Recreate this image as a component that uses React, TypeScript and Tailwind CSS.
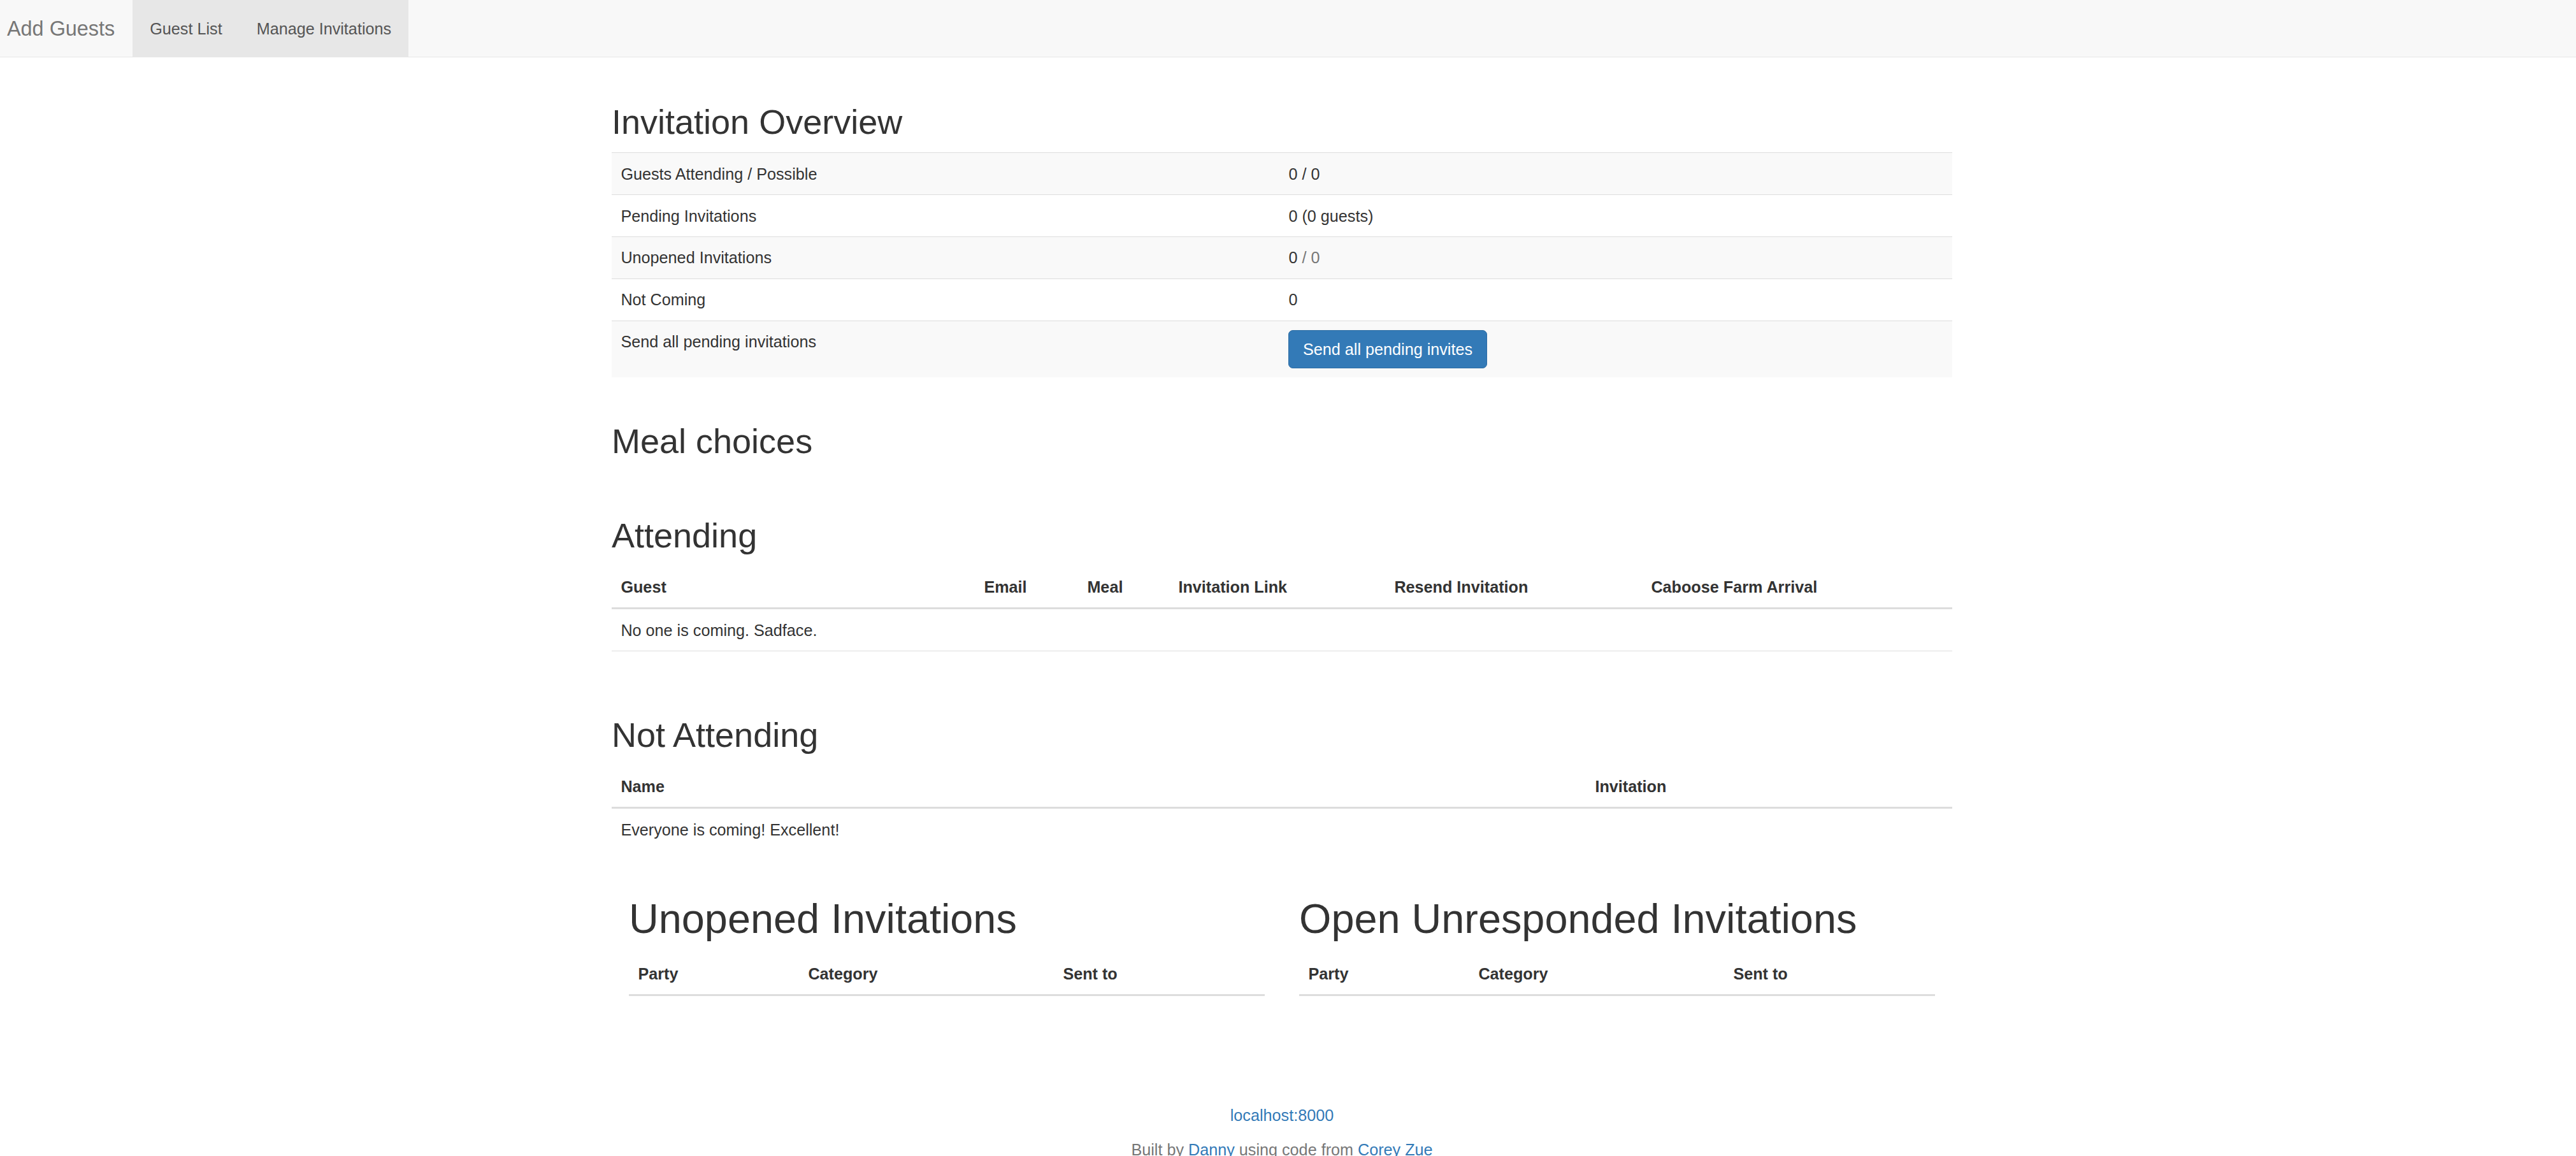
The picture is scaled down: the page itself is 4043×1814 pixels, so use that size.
import React from "react";

const font = { fontFamily: '"Liberation Sans", Arial, Helvetica, sans-serif' };

function OverviewRow({ label, striped, children }: { label: string; striped?: boolean; children: React.ReactNode }) {
  return (
    <tr className={striped ? "bg-[#f9f9f9]" : ""}>
      <td className="w-[1048px] border-t border-[#dddddd] px-[14.4px] py-[14.4px] align-top leading-[36px]">{label}</td>
      <td className="border-t border-[#dddddd] px-[14.4px] py-[14.4px] align-top leading-[36px]">{children}</td>
    </tr>
  );
}

function Th({ children, w }: { children?: React.ReactNode; w: string }) {
  return (
    <th className={`${w} border-b-[3px] border-[#dddddd] px-[14.4px] py-[14.4px] text-left align-bottom font-bold leading-[36px]`}>{children}</th>
  );
}

export default function App() {
  return (
    <div style={font} className="min-h-[1814px] bg-white text-[25.2px] leading-[36px] text-[#333333]">
      {/* Navbar */}
      <div className="flex h-[90px] border-b border-[#e7e7e7] bg-[#f8f8f8]">
        <div className="pl-[11px] pr-[10px] pt-[27px] text-[32.4px] leading-[36px] text-[#777777]">Add Guests</div>
        <div className="ml-[18px] flex h-[89px] bg-[#e7e7e7] text-[#555555]">
          <div className="px-[27px] pt-[27px] leading-[36px]">Guest List</div>
          <div className="px-[27px] pt-[27px] leading-[36px]">Manage Invitations</div>
        </div>
      </div>

      <div className="ml-[960px] flex w-[2104px] flex-col">
        <h2 className="mt-[72px] mb-[18px] text-[54px] leading-[1.1] font-normal">Invitation Overview</h2>
        <table className="w-full table-fixed border-collapse">
          <tbody>
            <OverviewRow label="Guests Attending / Possible" striped>0 / 0</OverviewRow>
            <OverviewRow label="Pending Invitations">0 (0 guests)</OverviewRow>
            <OverviewRow label="Unopened Invitations" striped>
              0 <span className="text-[#777777]">/ 0</span>
            </OverviewRow>
            <OverviewRow label="Not Coming">0</OverviewRow>
            <OverviewRow label="Send all pending invitations" striped>
              <button className="rounded-[7px] border border-[#2e6da4] bg-[#337ab7] px-[21.6px] py-[10.8px] text-[25.2px] leading-[36px] text-white">
                Send all pending invites
              </button>
            </OverviewRow>
          </tbody>
        </table>

        <h2 className="mt-[71px] text-[54px] leading-[1.1] font-normal">Meal choices</h2>

        <h2 className="mt-[89px] mb-[18px] text-[54px] leading-[1.1] font-normal">Attending</h2>
        <table className="w-full table-fixed border-collapse">
          <thead>
            <tr>
              <Th w="w-[570px]">Guest</Th>
              <Th w="w-[162px]">Email</Th>
              <Th w="w-[143px]">Meal</Th>
              <Th w="w-[339px]">Invitation Link</Th>
              <Th w="w-[403px]">Resend Invitation</Th>
              <Th w="w-auto">Caboose Farm Arrival</Th>
            </tr>
          </thead>
          <tbody>
            <tr>
              <td colSpan={6} className="border-b border-[#dddddd] px-[14.4px] py-[14.4px] leading-[36px]">No one is coming. Sadface.</td>
            </tr>
          </tbody>
        </table>

        <h2 className="mt-[102px] mb-[18px] text-[54px] leading-[1.1] font-normal">Not Attending</h2>
        <table className="w-full table-fixed border-collapse">
          <thead>
            <tr>
              <Th w="w-[1529px]">Name</Th>
              <Th w="w-auto">Invitation</Th>
            </tr>
          </thead>
          <tbody>
            <tr>
              <td colSpan={2} className="px-[14.4px] py-[14.4px] leading-[36px]">Everyone is coming! Excellent!</td>
            </tr>
          </tbody>
        </table>

        <div className="mt-[72px] grid grid-cols-2">
          {["Unopened Invitations", "Open Unresponded Invitations"].map((t) => (
            <div key={t} className="px-[27px]">
              <h1 className="mb-[18px] text-[64.8px] leading-[1.1] font-normal">{t}</h1>
              <table className="w-full table-fixed border-collapse">
                <thead>
                  <tr>
                    <Th w="w-[267px]">Party</Th>
                    <Th w="w-[400px]">Category</Th>
                    <Th w="w-auto">Sent to</Th>
                  </tr>
                </thead>
                <tbody></tbody>
              </table>
            </div>
          ))}
        </div>

        <div className="mt-[169px] flex flex-col items-center">
          <p className="mb-[18px] leading-[36px] text-[#337ab7]">localhost:8000</p>
          <p className="leading-[36px] text-[#777777]">
            Built by <span className="text-[#337ab7]">Danny</span> using code from <span className="text-[#337ab7]">Corey Zue</span>
          </p>
        </div>
      </div>
    </div>
  );
}
